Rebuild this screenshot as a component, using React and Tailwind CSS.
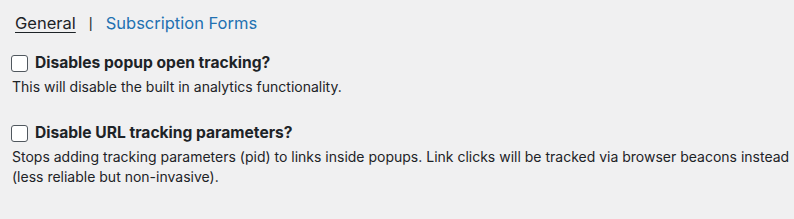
const options = [
  {
    label: 'Disables popup open tracking?',
    help: 'This will disable the built in analytics functionality.',
  },
  {
    label: 'Disable URL tracking parameters?',
    help: 'Stops adding tracking parameters (pid) to links inside popups. Link clicks will be tracked via browser beacons instead (less reliable but non-invasive).',
  },
];

export default function App() {
  return (
    <div className="w-[794px] h-[219px] bg-[#f0f0f1] text-[#1d2327] font-['Inter',Arial,sans-serif] overflow-hidden">
      <div className="flex items-center pl-[15px] pt-[12px] text-[16.5px] leading-[22px]">
        <a href="#general" className="text-[#1d2327] underline underline-offset-[3px]">
          General
        </a>
        <span className="mx-[13px] font-['Liberation_Sans',Arial,sans-serif] text-[15px] text-[#2c3338]">|</span>
        <a href="#forms" className="text-[#2271b1]">
          Subscription Forms
        </a>
      </div>

      <div className="flex flex-col gap-[27px] pl-[11px] pt-[20px]">
        {options.map((opt) => (
          <div key={opt.label} className="flex flex-col">
            <label className="flex items-center gap-[7px]">
              <input
                type="checkbox"
                className="appearance-none w-[17px] h-[17px] border border-[#50575e] rounded-[3px] bg-white"
              />
              <span className="font-bold text-[15.6px] leading-[18px]">{opt.label}</span>
            </label>
            <p className="mt-[5px] pl-px text-[14px] leading-[20px]">{opt.help}</p>
          </div>
        ))}
      </div>
    </div>
  );
}
